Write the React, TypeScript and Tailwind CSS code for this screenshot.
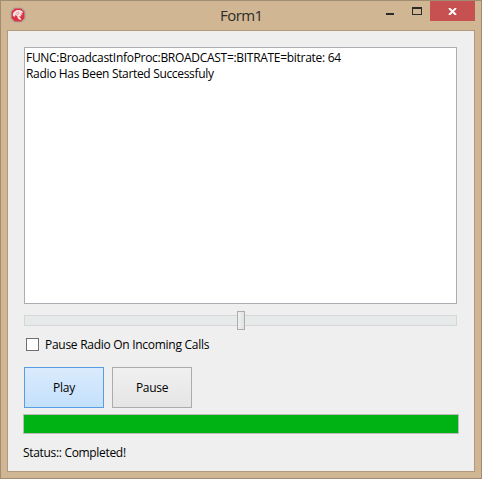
import React from "react";

function AppIcon() {
  return (
    <svg className="mt-[6px] ml-[9px] h-4 w-4 shrink-0" viewBox="0 0 16 16">
      <path d="M4.500 1h7L15 4.500v7L11.500 15h-7L1 11.500v-7z" fill="#d93440" stroke="#b3a3a0" strokeWidth="1.2" />
      <path d="M2.800 8.500C2.800 5 5.500 3 9 3.100c2 .1 3.600 1 4.200 2.800l-2-.2 1.500 2-2.200-.3.800 2-2-.5.5 1.500c.9.500 1.300 1.500 1.500 2.600-2.300 0-3.800-1.500-4.100-3.700L5.500 8l-1 2z" fill="#f9e4e3" />
      <path d="M5.500 6.700l3.500-1.900M6.500 8l3-1.800" stroke="#dc4a50" strokeWidth=".5" />
    </svg>
  );
}

function TitleBar() {
  return (
    <header className="flex h-[29px] w-full shrink-0 items-start">
      <AppIcon />
      <h1 className="ml-[194px] mt-[4px] w-[60px] whitespace-nowrap text-[15px] leading-[20px] tracking-[-0.55px] text-[#2e2b28]">Form1</h1>
      <div className="ml-[100px] flex items-start">
        <button aria-label="Minimize" className="mt-[12px] ml-[6px] h-[2px] w-2 bg-[#2a2a2a]" />
        <button aria-label="Maximize" className="mt-[6px] ml-[18px] h-2 w-[10px] border border-t-2 border-[#2a2a2a]" />
        <button aria-label="Close" className="ml-2 flex h-5 w-[45px] items-start justify-center bg-[#c75050] pt-[7px]">
          <svg className="h-[7px] w-[9px]" viewBox="0 0 9 7"><path d="M1 0l7 7M8 0L1 7" stroke="#fff" strokeWidth="1.9" /></svg>
        </button>
      </div>
    </header>
  );
}

export default function App() {
  return (
    <div className="flex h-[479px] w-[482px] flex-col overflow-hidden border border-[#a08c70] bg-[#d0b692] font-['Open_Sans','Noto_Sans',sans-serif] text-[12px] text-black">
      <TitleBar />
      <main className="ml-[6px] flex h-[442px] w-[468px] flex-col border border-[#b09a7b] bg-[#efefef] pl-[15px]">
        <div className="ml-px mt-4 h-[257px] w-[433px] shrink-0 border border-[#abadb3] bg-white pl-px pt-[2px] leading-4">
          <p className="whitespace-nowrap tracking-[-0.295px]">FUNC:BroadcastInfoProc:BROADCAST=:BITRATE=bitrate: 64</p>
          <p className="whitespace-nowrap tracking-[-0.33px]">Radio Has Been Started Successfuly</p>
        </div>
        <div className="ml-px mt-[7px] flex h-[19px] w-[433px] shrink-0 items-center">
          <div className="-mt-px flex h-[11px] w-full items-center border border-[#d6d6d6] bg-[#e7eaea]">
            <div className="ml-[212px] h-[19px] w-2 shrink-0 border border-[#acacac] bg-linear-to-r from-[#f0f0f0] to-[#e2e2e2]" />
          </div>
        </div>
        <label className="ml-[3px] mt-[5px] flex h-[18px] shrink-0 items-center">
          <span className="h-[13px] w-[13px] border border-[#707070] bg-white" />
          <span className="ml-[6px] mt-px whitespace-nowrap tracking-[-0.28px]">Pause Radio On Incoming Calls</span>
        </label>
        <div className="ml-px mt-[14px] flex h-[41px] shrink-0 gap-2">
          <button className="w-20 border border-[#569de5] bg-linear-to-b from-[#daebfc] to-[#c4e0fc] tracking-[-0.25px]">Play</button>
          <button className="w-20 border border-[#acacac] bg-linear-to-b from-[#f0f0f0] to-[#e5e5e5] tracking-[-0.3px]">Pause</button>
        </div>
        <div className="mt-[6px] h-5 w-[436px] shrink-0 border border-[#bcbcbc] bg-[#00b315]" />
        <p className="mt-[11px] leading-4 tracking-[-0.32px]">Status:: Completed!</p>
      </main>
    </div>
  );
}
